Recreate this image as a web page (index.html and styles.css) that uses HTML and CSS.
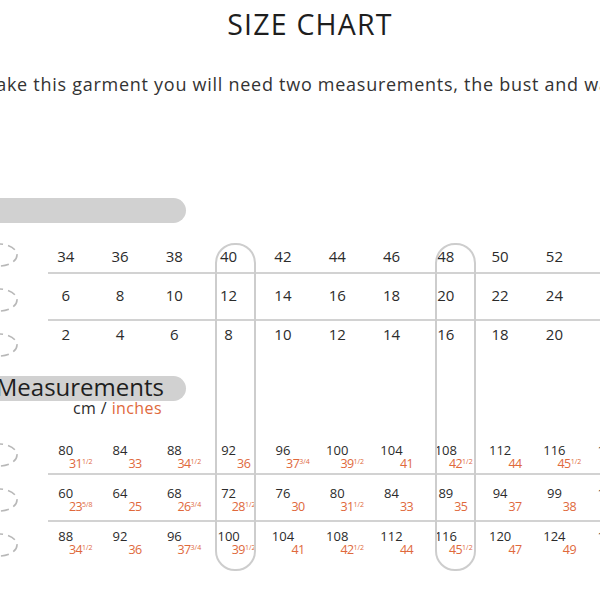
FILE: index.html
```html
<!DOCTYPE html>
<html>
<head>
<meta charset="utf-8">
<link rel="stylesheet" href="styles.css">
</head>
<body>
<div class="page">
  <h1 class="title">SIZE CHART</h1>
  <div class="intro"><p>To make this garment you will need two measurements, the bust and waist.</p></div>

  <div class="pill"></div>

  <div class="table sizes">
    <div class="icons">
      <svg class="ico" width="40" height="24" viewBox="0 0 40 24"><ellipse cx="20" cy="12" rx="18" ry="11"/></svg>
      <svg class="ico" width="40" height="24" viewBox="0 0 40 24"><ellipse cx="20" cy="12" rx="18" ry="11"/></svg>
      <svg class="ico" width="40" height="24" viewBox="0 0 40 24"><ellipse cx="20" cy="12" rx="18" ry="11"/></svg>
    </div>
    <div class="rows">
      <div class="srow s1"><span>34</span><span>36</span><span>38</span><span>40</span><span>42</span><span>44</span><span>46</span><span>48</span><span>50</span><span>52</span></div>
      <div class="rule"></div>
      <div class="srow s2"><span>6</span><span>8</span><span>10</span><span>12</span><span>14</span><span>16</span><span>18</span><span>20</span><span>22</span><span>24</span></div>
      <div class="rule"></div>
      <div class="srow s3"><span>2</span><span>4</span><span>6</span><span>8</span><span>10</span><span>12</span><span>14</span><span>16</span><span>18</span><span>20</span></div>
    </div>
  </div>

  <div class="pill"><span class="pill-label">Measurements</span></div>
  <div class="units">cm / <span class="orange">inches</span></div>

  <div class="table meas">
    <div class="icons">
      <svg class="ico" width="40" height="24" viewBox="0 0 40 24"><ellipse cx="20" cy="12" rx="18" ry="11"/></svg>
      <svg class="ico" width="40" height="24" viewBox="0 0 40 24"><ellipse cx="20" cy="12" rx="18" ry="11"/></svg>
      <svg class="ico" width="40" height="24" viewBox="0 0 40 24"><ellipse cx="20" cy="12" rx="18" ry="11"/></svg>
    </div>
    <div class="rows">
      <div class="mrow m1">
        <div class="cell"><span class="cm">80</span><span class="in">31<span class="fr">1/2</span></span></div>
        <div class="cell"><span class="cm">84</span><span class="in">33</span></div>
        <div class="cell"><span class="cm">88</span><span class="in">34<span class="fr">1/2</span></span></div>
        <div class="cell"><span class="cm">92</span><span class="in">36</span></div>
        <div class="cell"><span class="cm">96</span><span class="in">37<span class="fr">3/4</span></span></div>
        <div class="cell"><span class="cm">100</span><span class="in">39<span class="fr">1/2</span></span></div>
        <div class="cell"><span class="cm">104</span><span class="in">41</span></div>
        <div class="cell"><span class="cm">108</span><span class="in">42<span class="fr">1/2</span></span></div>
        <div class="cell"><span class="cm">112</span><span class="in">44</span></div>
        <div class="cell"><span class="cm">116</span><span class="in">45<span class="fr">1/2</span></span></div>
        <div class="cell"><span class="cm">120</span><span class="in">47</span></div>
      </div>
      <div class="rule"></div>
      <div class="mrow m2">
        <div class="cell"><span class="cm">60</span><span class="in">23<span class="fr">5/8</span></span></div>
        <div class="cell"><span class="cm">64</span><span class="in">25</span></div>
        <div class="cell"><span class="cm">68</span><span class="in">26<span class="fr">3/4</span></span></div>
        <div class="cell"><span class="cm">72</span><span class="in">28<span class="fr">1/2</span></span></div>
        <div class="cell"><span class="cm">76</span><span class="in">30</span></div>
        <div class="cell"><span class="cm">80</span><span class="in">31<span class="fr">1/2</span></span></div>
        <div class="cell"><span class="cm">84</span><span class="in">33</span></div>
        <div class="cell"><span class="cm">89</span><span class="in">35</span></div>
        <div class="cell"><span class="cm">94</span><span class="in">37</span></div>
        <div class="cell"><span class="cm">99</span><span class="in">38</span></div>
        <div class="cell"><span class="cm">104</span><span class="in">41</span></div>
      </div>
      <div class="rule"></div>
      <div class="mrow m3">
        <div class="cell"><span class="cm">88</span><span class="in">34<span class="fr">1/2</span></span></div>
        <div class="cell"><span class="cm">92</span><span class="in">36</span></div>
        <div class="cell"><span class="cm">96</span><span class="in">37<span class="fr">3/4</span></span></div>
        <div class="cell"><span class="cm">100</span><span class="in">39<span class="fr">1/2</span></span></div>
        <div class="cell"><span class="cm">104</span><span class="in">41</span></div>
        <div class="cell"><span class="cm">108</span><span class="in">42<span class="fr">1/2</span></span></div>
        <div class="cell"><span class="cm">112</span><span class="in">44</span></div>
        <div class="cell"><span class="cm">116</span><span class="in">45<span class="fr">1/2</span></span></div>
        <div class="cell"><span class="cm">120</span><span class="in">47</span></div>
        <div class="cell"><span class="cm">124</span><span class="in">49</span></div>
        <div class="cell"><span class="cm">128</span><span class="in">50<span class="fr">1/2</span></span></div>
      </div>
    </div>
  </div>

  <div class="hl hl-a"></div>
  <div class="hl hl-b"></div>
</div>
</body>
</html>
```

FILE: styles.css
```css
html, body {
  margin: 0;
  padding: 0;
  background: #ffffff;
}
body {
  width: 600px;
  height: 600px;
  overflow: hidden;
  font-family: "Open Sans", "Lato", sans-serif;
  color: #2b2b2b;
}
.page {
  position: relative;
  width: 600px;
  height: 600px;
}
.title {
  margin: 5px 0 0 0;
  width: 620px;
  text-align: center;
  font-size: 28.5px;
  line-height: 38px;
  letter-spacing: 1.2px;
  font-weight: 400;
  color: #1e1e1e;
}
.intro {
  margin-top: 29px;
  width: 600px;
  display: flex;
  justify-content: center;
}
.intro p {
  margin: 0 0 0 -12px;
  flex: none;
  white-space: nowrap;
  font-size: 18px;
  line-height: 24px;
  letter-spacing: 0.73px;
  color: #333;
}
.pill {
  margin-top: 102px;
  margin-left: -40px;
  width: 226px;
  height: 25px;
  border-radius: 0 12.5px 12.5px 0;
  background: #d1d1d1;
  display: flex;
  justify-content: flex-end;
  box-sizing: border-box;
  padding-right: 22px;
}
.sizes + .pill {
  margin-top: 19px;
}
.pill-label {
  font-size: 24px;
  line-height: 22px;
  color: #1e1e1e;
  white-space: nowrap;
}
.table {
  display: flex;
  align-items: flex-start;
}
.sizes { margin-top: 20px; }
.meas { margin-top: 28px; }
.icons {
  flex: none;
  width: 38.6px;
  display: flex;
  flex-direction: column;
  gap: 21px;
}
.ico {
  display: block;
  margin-left: -21px;
}
.ico ellipse {
  fill: none;
  stroke: #b8b8b8;
  stroke-width: 1.6;
  stroke-dasharray: 8 5;
}
.rows {
  flex: none;
}
.rule {
  margin-left: 9.4px;
  width: 588px;
  height: 2px;
  background: #d2d2d2;
}
.srow {
  display: grid;
  grid-template-columns: repeat(11, 54.3px);
  font-size: 15px;
  line-height: 20px;
  color: #2b2b2b;
  box-sizing: border-box;
}
.srow span { text-align: center; }
.s1 { padding-top: 3px; height: 29px; }
.s2 { padding-top: 11px; height: 45px; }
.s3 { padding-top: 3px; }

.units {
  margin-top: 0;
  padding-left: 73px;
  font-size: 16px;
  line-height: 14px;
  letter-spacing: 0.4px;
  color: #2b2b2b;
}
.orange, .in { color: #e0693c; }

.mrow {
  display: grid;
  grid-template-columns: repeat(11, 54.3px);
}
.m1 { padding-bottom: 2px; }
.m2 { padding-top: 11px; padding-bottom: 6px; }
.m3 { padding-top: 7px; }
.cell {
  display: flex;
  flex-direction: column;
  align-items: center;
}
.cm {
  font-size: 13px;
  line-height: 14px;
  color: #2b2b2b;
}
.in {
  padding-left: 30px;
  font-size: 12.5px;
  line-height: 14px;
  letter-spacing: -0.6px;
  white-space: nowrap;
}
.fr {
  font-size: 7px;
  letter-spacing: 0;
  vertical-align: 4px;
  line-height: 0;
}
.hl {
  position: absolute;
  top: 238px;
  width: 41px;
  height: 328px;
  box-sizing: border-box;
  border: 2px solid #cdcdcd;
  border-radius: 20px;
}
.hl-a { left: 215px; }
.hl-b { left: 435px; }
```
